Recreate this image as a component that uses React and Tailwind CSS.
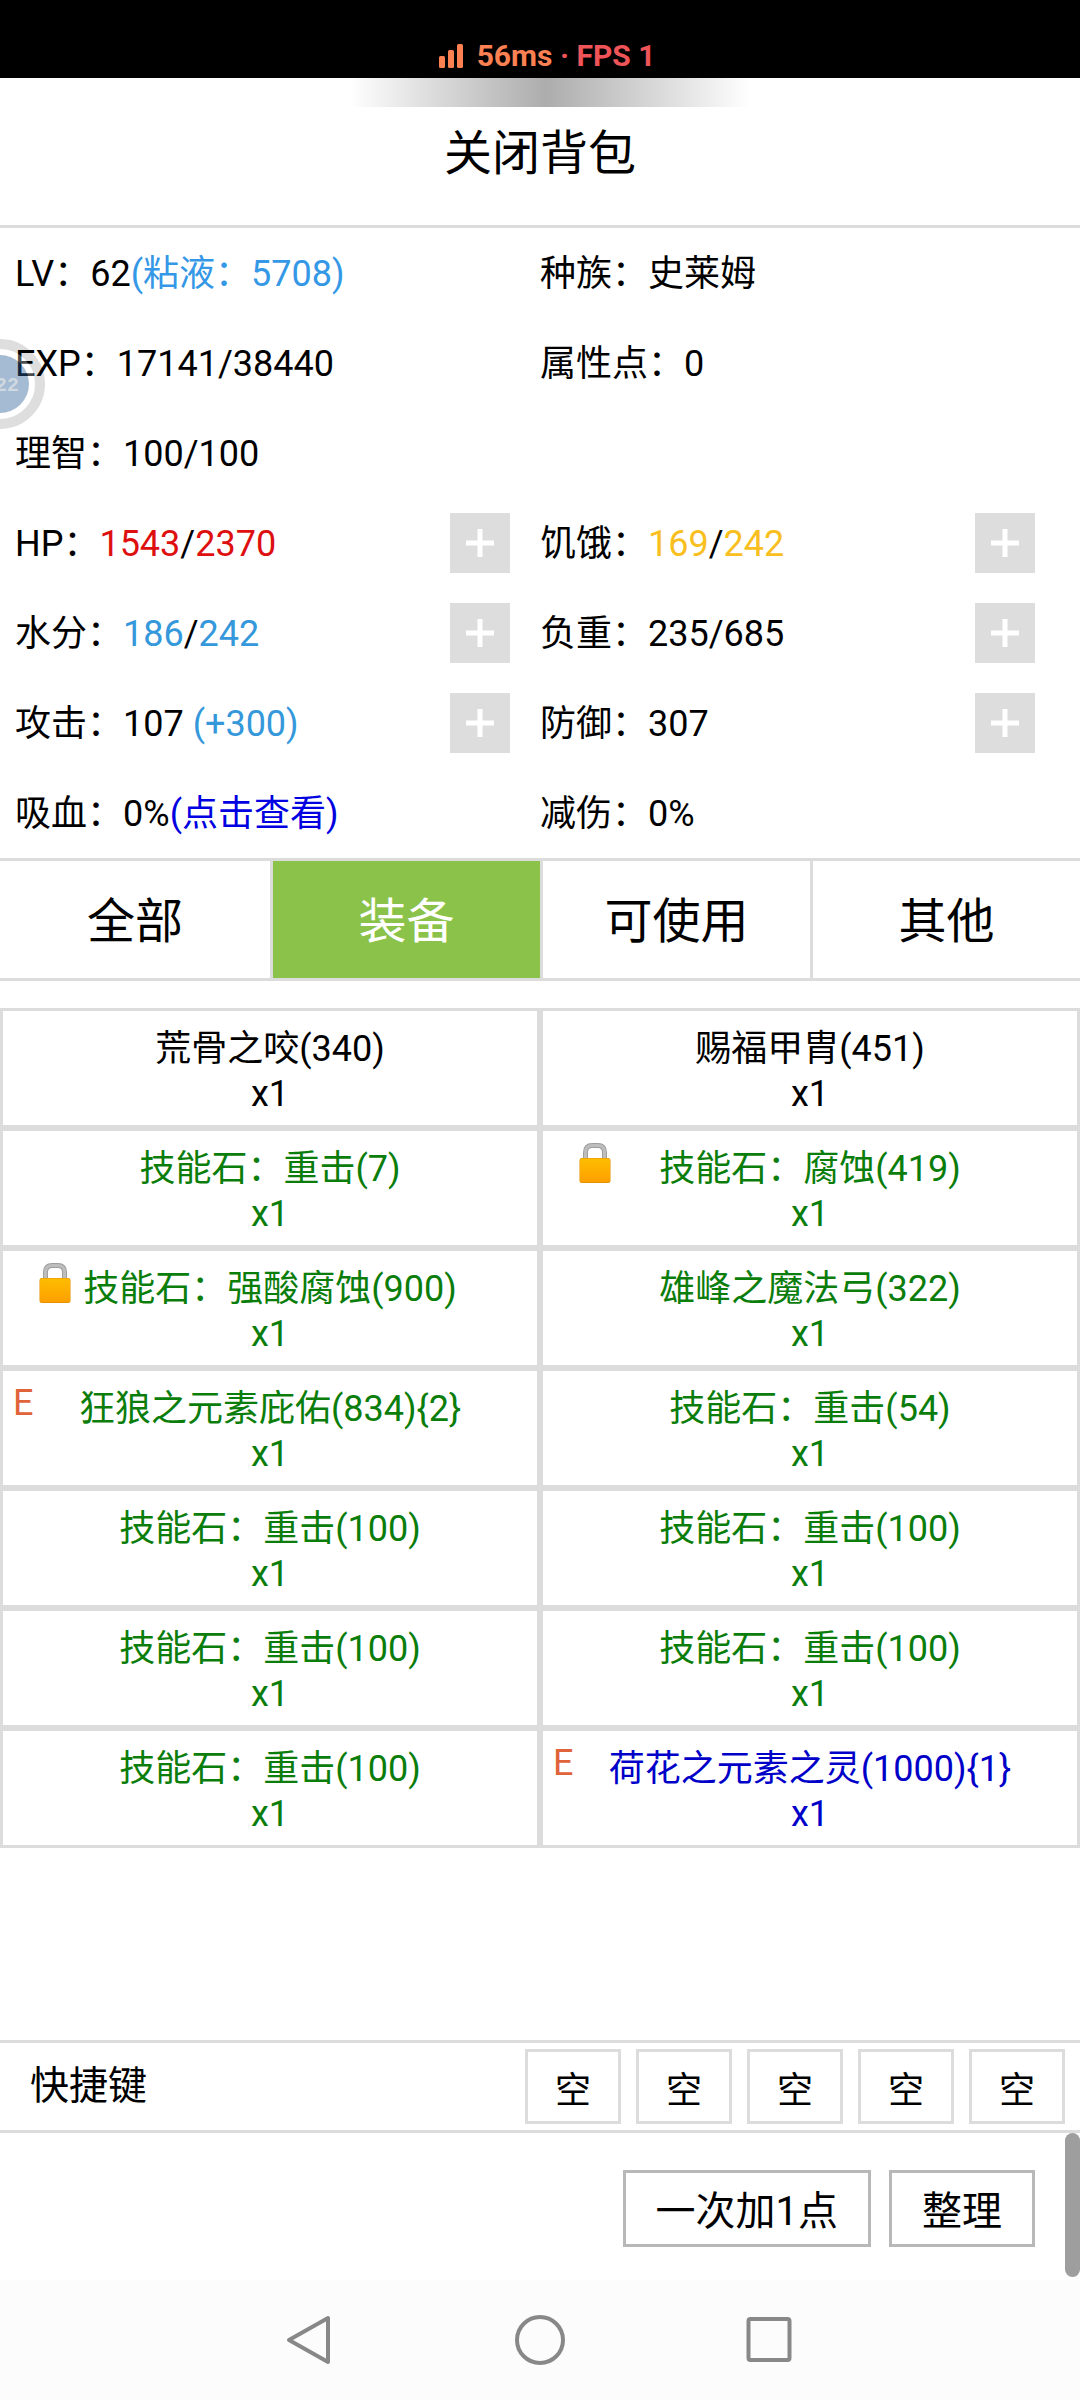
import React, { useState } from 'react';
import clsx from 'clsx';

const leftStats = [
  { id: 'lv', label: 'LV：', parts: [{ text: '62' }, { text: '(粘液：5708)', color: 'text-[#3498e6]' }] },
  { id: 'exp', label: 'EXP：', parts: [{ text: '17141/38440' }] },
  { id: 'sanity', label: '理智：', parts: [{ text: '100/100' }] },
  {
    id: 'hp',
    label: 'HP：',
    canAdd: true,
    parts: [{ text: '1543', color: 'text-[#dd0f0f]' }, { text: '/' }, { text: '2370', color: 'text-[#dd0f0f]' }],
  },
  {
    id: 'water',
    label: '水分：',
    canAdd: true,
    parts: [{ text: '186', color: 'text-[#3498db]' }, { text: '/' }, { text: '242', color: 'text-[#3498db]' }],
  },
  { id: 'attack', label: '攻击：', canAdd: true, parts: [{ text: '107 ' }, { text: '(+300)', color: 'text-[#3498db]' }] },
  { id: 'drain', label: '吸血：', parts: [{ text: '0%' }, { text: '(点击查看)', color: 'text-[#0000e0]', link: true }] },
];

const rightStats = [
  { id: 'race', label: '种族：', parts: [{ text: '史莱姆' }] },
  { id: 'points', label: '属性点：', parts: [{ text: '0' }] },
  { id: 'blank', label: '', parts: [] },
  {
    id: 'hunger',
    label: '饥饿：',
    canAdd: true,
    parts: [{ text: '169', color: 'text-[#f9bf20]' }, { text: '/' }, { text: '242', color: 'text-[#f9bf20]' }],
  },
  { id: 'weight', label: '负重：', canAdd: true, parts: [{ text: '235/685' }] },
  { id: 'defense', label: '防御：', canAdd: true, parts: [{ text: '307' }] },
  { id: 'reduce', label: '减伤：', parts: [{ text: '0%' }] },
];

const tabs = ['全部', '装备', '可使用', '其他'];

const items = [
  { name: '荒骨之咬(340)', color: 'text-black' },
  { name: '赐福甲胄(451)', color: 'text-black' },
  { name: '技能石：重击(7)', color: 'text-[#0b7d0b]' },
  { name: '技能石：腐蚀(419)', color: 'text-[#0b7d0b]', locked: true },
  { name: '技能石：强酸腐蚀(900)', color: 'text-[#0b7d0b]', locked: true },
  { name: '雄峰之魔法弓(322)', color: 'text-[#0b7d0b]' },
  { name: '狂狼之元素庇佑(834){2}', color: 'text-[#0b7d0b]', equipped: true },
  { name: '技能石：重击(54)', color: 'text-[#0b7d0b]' },
  { name: '技能石：重击(100)', color: 'text-[#0b7d0b]' },
  { name: '技能石：重击(100)', color: 'text-[#0b7d0b]' },
  { name: '技能石：重击(100)', color: 'text-[#0b7d0b]' },
  { name: '技能石：重击(100)', color: 'text-[#0b7d0b]' },
  { name: '技能石：重击(100)', color: 'text-[#0b7d0b]' },
  { name: '荷花之元素之灵(1000){1}', color: 'text-[#0000c8]', equipped: true },
];

const LockIcon = () => (
  <svg className="absolute left-9 top-3 h-10 w-8" viewBox="0 0 32 40" aria-label="已锁定">
    <defs>
      <linearGradient id="lockBody" x1="0" y1="0" x2="0" y2="1">
        <stop offset="0" stopColor="#fdbd00" />
        <stop offset="1" stopColor="#fd9f00" />
      </linearGradient>
    </defs>
    <path d="M6.500 18V9.500Q6.500 2.500 13 2.500H19Q25.500 2.500 25.500 9.500V18" fill="none" stroke="#9e9e9e" strokeWidth="5" />
    <path d="M6.500 18V9.500Q6.500 2.500 13 2.500H19Q25.500 2.500 25.500 9.500V18" fill="none" stroke="#bdbdbd" strokeWidth="3" />
    <rect x="0.500" y="15" width="31" height="25" rx="2.500" fill="#e69100" />
    <rect x="1" y="15.500" width="30" height="23.500" rx="2" fill="url(#lockBody)" />
  </svg>
);

const StatusBar = () => (
  <header className="flex h-[78px] items-end justify-center bg-black pb-1 pl-3.5">
    <div className="flex items-center gap-3.5 text-[30px] leading-9 font-bold">
      <svg className="h-6 w-6" viewBox="0 0 24 24" fill="#fb8153">
        <rect x="0" y="12" width="6" height="12" rx="1.500" />
        <rect x="9" y="6" width="6" height="18" rx="1.500" />
        <rect x="18" y="0" width="6" height="24" rx="1.500" />
      </svg>
      <p className="text-[#ef5459]">
        <span className="text-[#fb8153]">56ms</span> · FPS 1
      </p>
    </div>
  </header>
);

const StatRow = ({ stat }) => (
  <div className="flex h-[90px] items-center justify-between">
    <p className="pt-0.5 whitespace-pre">
      {stat.label}
      {stat.parts.map((part, i) =>
        part.link ? (
          <a key={i} href="#drain" className={part.color}>{part.text}</a>
        ) : (
          <span key={i} className={part.color}>{part.text}</span>
        )
      )}
    </p>
    {stat.canAdd && (
      <button type="button" aria-label={`${stat.label}加点`} className="flex size-[60px] items-center justify-center bg-[#ddd]">
        <svg className="size-7" viewBox="0 0 28 28" stroke="#fff" strokeWidth="5">
          <path d="M14 0V28M0 14H28" />
        </svg>
      </button>
    )}
  </div>
);

const ItemCell = ({ item }) => (
  <button type="button" className={clsx('relative h-[120px] border-3 border-[#dcdcdc] pt-2 leading-[45px]', item.color)}>
    {item.locked && <LockIcon />}
    {item.equipped && <span className="absolute left-2.5 top-2.5 text-[#e0633a]">E</span>}
    <span className="block">{item.name}</span>
    <span className="block">x1</span>
  </button>
);

const FloatingTimer = () => (
  <svg className="absolute left-0 top-[339px] h-[90px] w-[45px]" viewBox="0 0 45 90">
    <circle cx="0" cy="45" r="40" fill="none" stroke="#000" strokeOpacity="0.13" strokeWidth="10" />
    <circle cx="0" cy="45" r="32" fill="none" stroke="#fff" strokeOpacity="0.3" strokeWidth="6" />
    <circle cx="0" cy="45" r="29" fill="#285a96" fillOpacity="0.42" />
    <text x="-5" y="52" fontSize="20" fontWeight="700" fontFamily="Liberation Mono, monospace" fill="#d0d8e0">22</text>
  </svg>
);

const NavBar = () => (
  <nav className="flex h-[120px] items-center justify-center gap-[180px] bg-[#fcfcfc]">
    <button type="button" aria-label="返回">
      <svg className="size-[50px]" viewBox="0 0 50 50" fill="none" stroke="#888" strokeWidth="4" strokeLinejoin="round">
        <path d="M43 3V47L4 25Z" />
      </svg>
    </button>
    <button type="button" aria-label="主页">
      <svg className="size-[50px]" viewBox="0 0 50 50" fill="none" stroke="#888" strokeWidth="4">
        <circle cx="25" cy="25" r="23" />
      </svg>
    </button>
    <button type="button" aria-label="最近任务">
      <svg className="size-[50px]" viewBox="0 0 50 50" fill="none" stroke="#888" strokeWidth="4">
        <rect x="3.500" y="4" width="41" height="41" rx="2" />
      </svg>
    </button>
  </nav>
);

const App = () => {
  const [activeTab, setActiveTab] = useState('装备');

  return (
    <div className="relative flex min-h-screen flex-col bg-white font-[Roboto,'Noto_Sans_CJK_SC',sans-serif] text-4xl text-black">
      <StatusBar />

      <div className="relative flex h-[150px] border-b-3 border-[#dcdcdc]">
        <div className="absolute left-5 right-0 top-0 mx-auto h-[29px] w-[400px] bg-linear-to-r from-white via-[#adadad] via-49% to-white" />
        <button type="button" className="relative flex-1 pt-1 text-5xl">关闭背包</button>
      </div>

      <section className="grid grid-cols-2">
        <div className="pl-[15px] pr-[30px]">
          {leftStats.map(stat => <StatRow key={stat.id} stat={stat} />)}
        </div>
        <div className="pr-[45px]">
          {rightStats.map(stat => <StatRow key={stat.id} stat={stat} />)}
        </div>
      </section>

      <div role="tablist" className="grid h-[123px] grid-cols-4 border-y-3 border-[#dcdcdc] text-5xl">
        {tabs.map((tab, i) => (
          <button
            key={tab}
            type="button"
            role="tab"
            aria-selected={tab === activeTab}
            onClick={() => setActiveTab(tab)}
            className={clsx(
              'pt-1',
              i > 0 && 'border-l-3 border-[#dcdcdc]',
              tab === activeTab && 'bg-[#8bc34a] text-white'
            )}
          >
            {tab}
          </button>
        ))}
      </div>

      <main className="flex-1 pt-[27px]">
        <div className="grid grid-cols-2">
          {items.map((item, i) => <ItemCell key={i} item={item} />)}
        </div>
      </main>

      <section className="flex h-[93px] items-center justify-between border-y-3 border-[#dcdcdc] pl-[30px] pr-[15px]">
        <h2 className="text-[39px]">快捷键</h2>
        <div className="flex gap-[15px]">
          {[1, 2, 3, 4, 5].map(slot => (
            <button key={slot} type="button" className="h-[75px] w-24 border-3 border-[#dcdcdc] pt-2">空</button>
          ))}
        </div>
      </section>

      <footer className="relative flex h-[147px] items-center justify-end gap-[18px] pt-1 pr-[45px] text-[40px]">
        <button type="button" className="h-[77px] border-3 border-[#b8b8b8] px-[30px] pt-2">一次加1点</button>
        <button type="button" className="h-[77px] border-3 border-[#b8b8b8] px-[30px] pt-2">整理</button>
        <div className="absolute right-0 top-0 h-36 w-[15px] rounded-full bg-[#9e9e9e]" />
      </footer>

      <NavBar />
      <FloatingTimer />
    </div>
  );
};

export default App;
